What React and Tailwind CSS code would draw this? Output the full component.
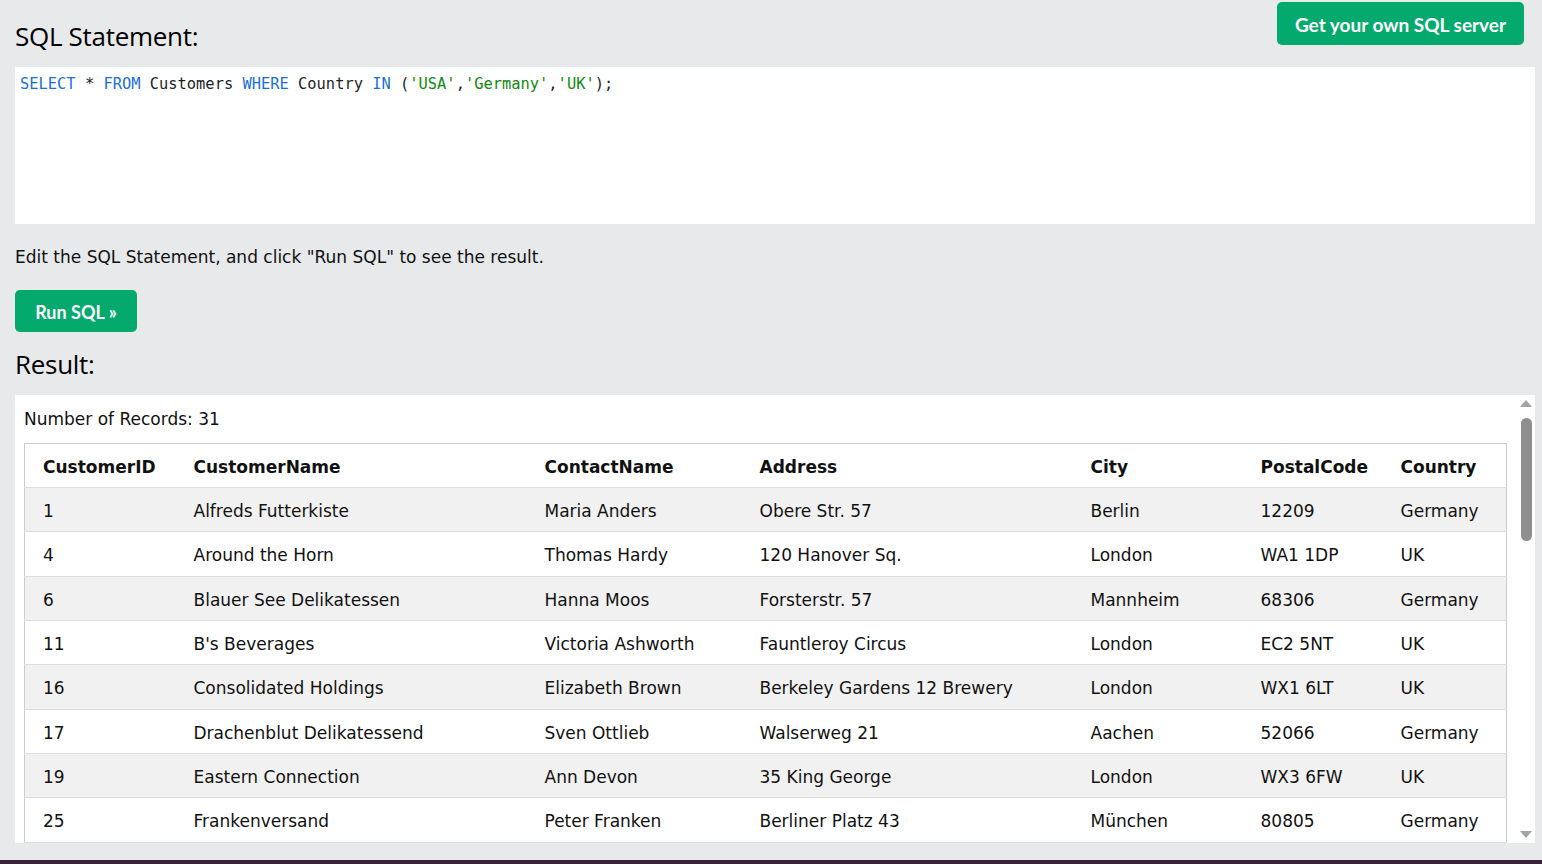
import React from "react";

// Rows shown in the result table
const ROWS = [
  ["1", "Alfreds Futterkiste", "Maria Anders", "Obere Str. 57", "Berlin", "12209", "Germany"],
  ["4", "Around the Horn", "Thomas Hardy", "120 Hanover Sq.", "London", "WA1 1DP", "UK"],
  ["6", "Blauer See Delikatessen", "Hanna Moos", "Forsterstr. 57", "Mannheim", "68306", "Germany"],
  ["11", "B's Beverages", "Victoria Ashworth", "Fauntleroy Circus", "London", "EC2 5NT", "UK"],
  ["16", "Consolidated Holdings", "Elizabeth Brown", "Berkeley Gardens 12 Brewery", "London", "WX1 6LT", "UK"],
  ["17", "Drachenblut Delikatessend", "Sven Ottlieb", "Walserweg 21", "Aachen", "52066", "Germany"],
  ["19", "Eastern Connection", "Ann Devon", "35 King George", "London", "WX3 6FW", "UK"],
  ["25", "Frankenversand", "Peter Franken", "Berliner Platz 43", "München", "80805", "Germany"],
];

const HEADERS = ["CustomerID", "CustomerName", "ContactName", "Address", "City", "PostalCode", "Country"];
const COL_WIDTHS = ["w-[151px]", "w-[351px]", "w-[215px]", "w-[331px]", "w-[170px]", "w-[140px]", "w-[124px]"];

const SqlCode = () => (
  <pre className="font-['DejaVu_Sans_Mono',monospace] text-[15.4px] leading-[20px] text-[#1e1e1e]">
    <span className="text-[#1a6fd8]">SELECT</span> * <span className="text-[#1a6fd8]">FROM</span> Customers{" "}
    <span className="text-[#1a6fd8]">WHERE</span> Country <span className="text-[#1a6fd8]">IN</span> (
    <span className="text-[#108a10]">'USA'</span>,<span className="text-[#108a10]">'Germany'</span>,
    <span className="text-[#108a10]">'UK'</span>);
  </pre>
);

const ScrollBar = () => (
  <div className="flex w-[18px] shrink-0 flex-col items-center pt-[5px]">
    <div className="h-0 w-0 border-x-[6px] border-b-[7px] border-x-transparent border-b-[#a3a3a3]" />
    <div className="mt-[11px] h-[123px] w-[11px] rounded-full bg-[#8f8f8f]" />
    <div className="flex-1" />
    <div className="mb-[5px] h-0 w-0 border-x-[6px] border-t-[7px] border-x-transparent border-t-[#a3a3a3]" />
  </div>
);

export default function App() {
  return (
    <div className="flex h-[864px] flex-col overflow-hidden bg-[#e7e9eb] text-black">
      <div className="flex flex-1 flex-col overflow-hidden pl-[15px] pr-[7px]">
        {/* Header */}
        <div className="flex h-[67px] items-start justify-between">
          <h2 className="mt-[19px] font-['Open_Sans',sans-serif] text-[26px] leading-[34px] tracking-[-0.3px]">
            SQL Statement:
          </h2>
          <button className="mr-[11px] mt-[2px] h-[43px] w-[247px] rounded-[5px] bg-[#04aa6d] pt-[3px] font-['Lato',sans-serif] text-[19px] font-bold text-white">
            Get your own SQL server
          </button>
        </div>

        {/* Editor */}
        <div className="h-[157px] bg-white px-[5px] pt-[7px]">
          <SqlCode />
        </div>

        <p className="mt-[22px] font-['DejaVu_Sans',sans-serif] text-[17px] leading-[22px] text-[#111]">
          Edit the SQL Statement, and click "Run SQL" to see the result.
        </p>

        <button className="mt-[22px] h-[42px] w-[122px] rounded-[5px] bg-[#04aa6d] pt-[2px] font-['Lato',sans-serif] text-[18px] font-bold text-white">
          Run SQL »
        </button>

        <h2 className="mt-[15px] font-['Open_Sans',sans-serif] text-[26px] leading-[34px] tracking-[-0.3px]">
          Result:
        </h2>

        {/* Result panel */}
        <div className="mt-[14px] mb-[17px] flex flex-1 overflow-hidden bg-white">
          <div className="flex-1 overflow-hidden pl-[9px] pr-[10px] pt-[12px] font-['DejaVu_Sans',sans-serif] text-[17px] text-[#111]">
            <div className="leading-[24px]">Number of Records: 31</div>
            <table className="mt-[12px] w-full border-collapse border border-[#cccccc]">
              <thead>
                <tr className="h-[44px] border-b border-[#dddddd]">
                  {HEADERS.map((h, i) => (
                    <th key={h} className={`${COL_WIDTHS[i]} pl-[18px] pt-[4px] text-left font-bold`}>
                      {h}
                    </th>
                  ))}
                </tr>
              </thead>
              <tbody>
                {ROWS.map((row, r) => (
                  <tr
                    key={row[0]}
                    className={`h-[44.33px] border-b border-[#dddddd] ${r % 2 === 0 ? "bg-[#f1f1f1]" : "bg-white"}`}
                  >
                    {row.map((cell, i) => (
                      <td key={i} className="pl-[18px] pt-[4px] text-left">
                        {cell}
                      </td>
                    ))}
                  </tr>
                ))}
              </tbody>
            </table>
          </div>
          <ScrollBar />
        </div>
      </div>
      <div className="h-[4px] bg-[#3a2338]" />
    </div>
  );
}
